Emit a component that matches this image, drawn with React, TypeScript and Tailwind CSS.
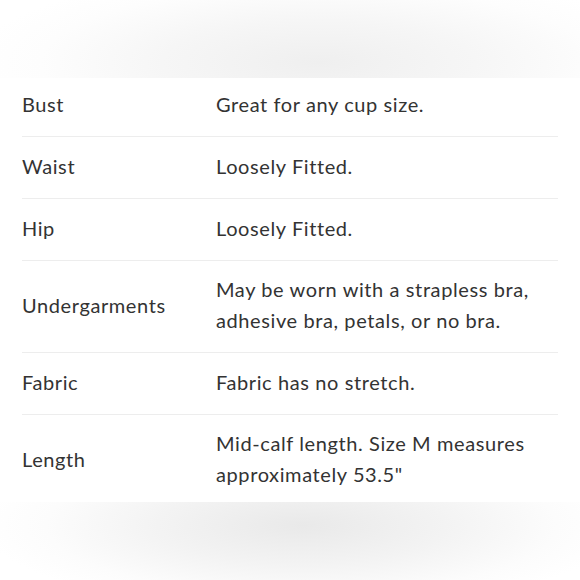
import React from "react";

const rows: { label: string; value: string[] }[] = [
  { label: "Bust", value: ["Great for any cup size."] },
  { label: "Waist", value: ["Loosely Fitted."] },
  { label: "Hip", value: ["Loosely Fitted."] },
  { label: "Undergarments", value: ["May be worn with a strapless bra,", "adhesive bra, petals, or no bra."] },
  { label: "Fabric", value: ["Fabric has no stretch."] },
  { label: "Length", value: ["Mid-calf length. Size M measures", "approximately 53.5\""] },
];

function padFor(i: number, lines: number, last: boolean) {
  if (last) return "pt-[13px] pb-[12px]";
  if (i === 0) return "pt-[11px] pb-[16px] border-b border-[#ededed]";
  if (lines > 1) return "pt-[13px] pb-[16px] border-b border-[#ededed]";
  return "pt-[14px] pb-[16px] border-b border-[#ededed]";
}

export default function App() {
  return (
    <div className="w-[580px] h-[580px] flex flex-col bg-white overflow-hidden" style={{ fontFamily: "Lato, 'Open Sans', sans-serif" }}>
      <div className="h-[78px] shrink-0 bg-[radial-gradient(ellipse_60%_120%_at_55%_80%,#efefef_0%,#f6f6f6_45%,#fdfdfd_80%,#ffffff_100%)]" />
      <div className="flex flex-col px-[22px] bg-white">
        {rows.map((r, i) => (
          <div
            key={r.label}
            className={`flex items-center text-[20px] leading-[31px] tracking-[0.6px] text-[#333333] ${padFor(i, r.value.length, i === rows.length - 1)}`}
          >
            <div className="w-[194px] shrink-0">{r.label}</div>
            <div className="flex flex-col">
              {r.value.map((v) => (
                <span key={v} className="h-[31px]">{v}</span>
              ))}
            </div>
          </div>
        ))}
      </div>
      <div className="flex-1 bg-[radial-gradient(ellipse_55%_110%_at_52%_30%,#e9e9e9_0%,#f3f3f3_45%,#fcfcfc_80%,#ffffff_100%)]" />
    </div>
  );
}
